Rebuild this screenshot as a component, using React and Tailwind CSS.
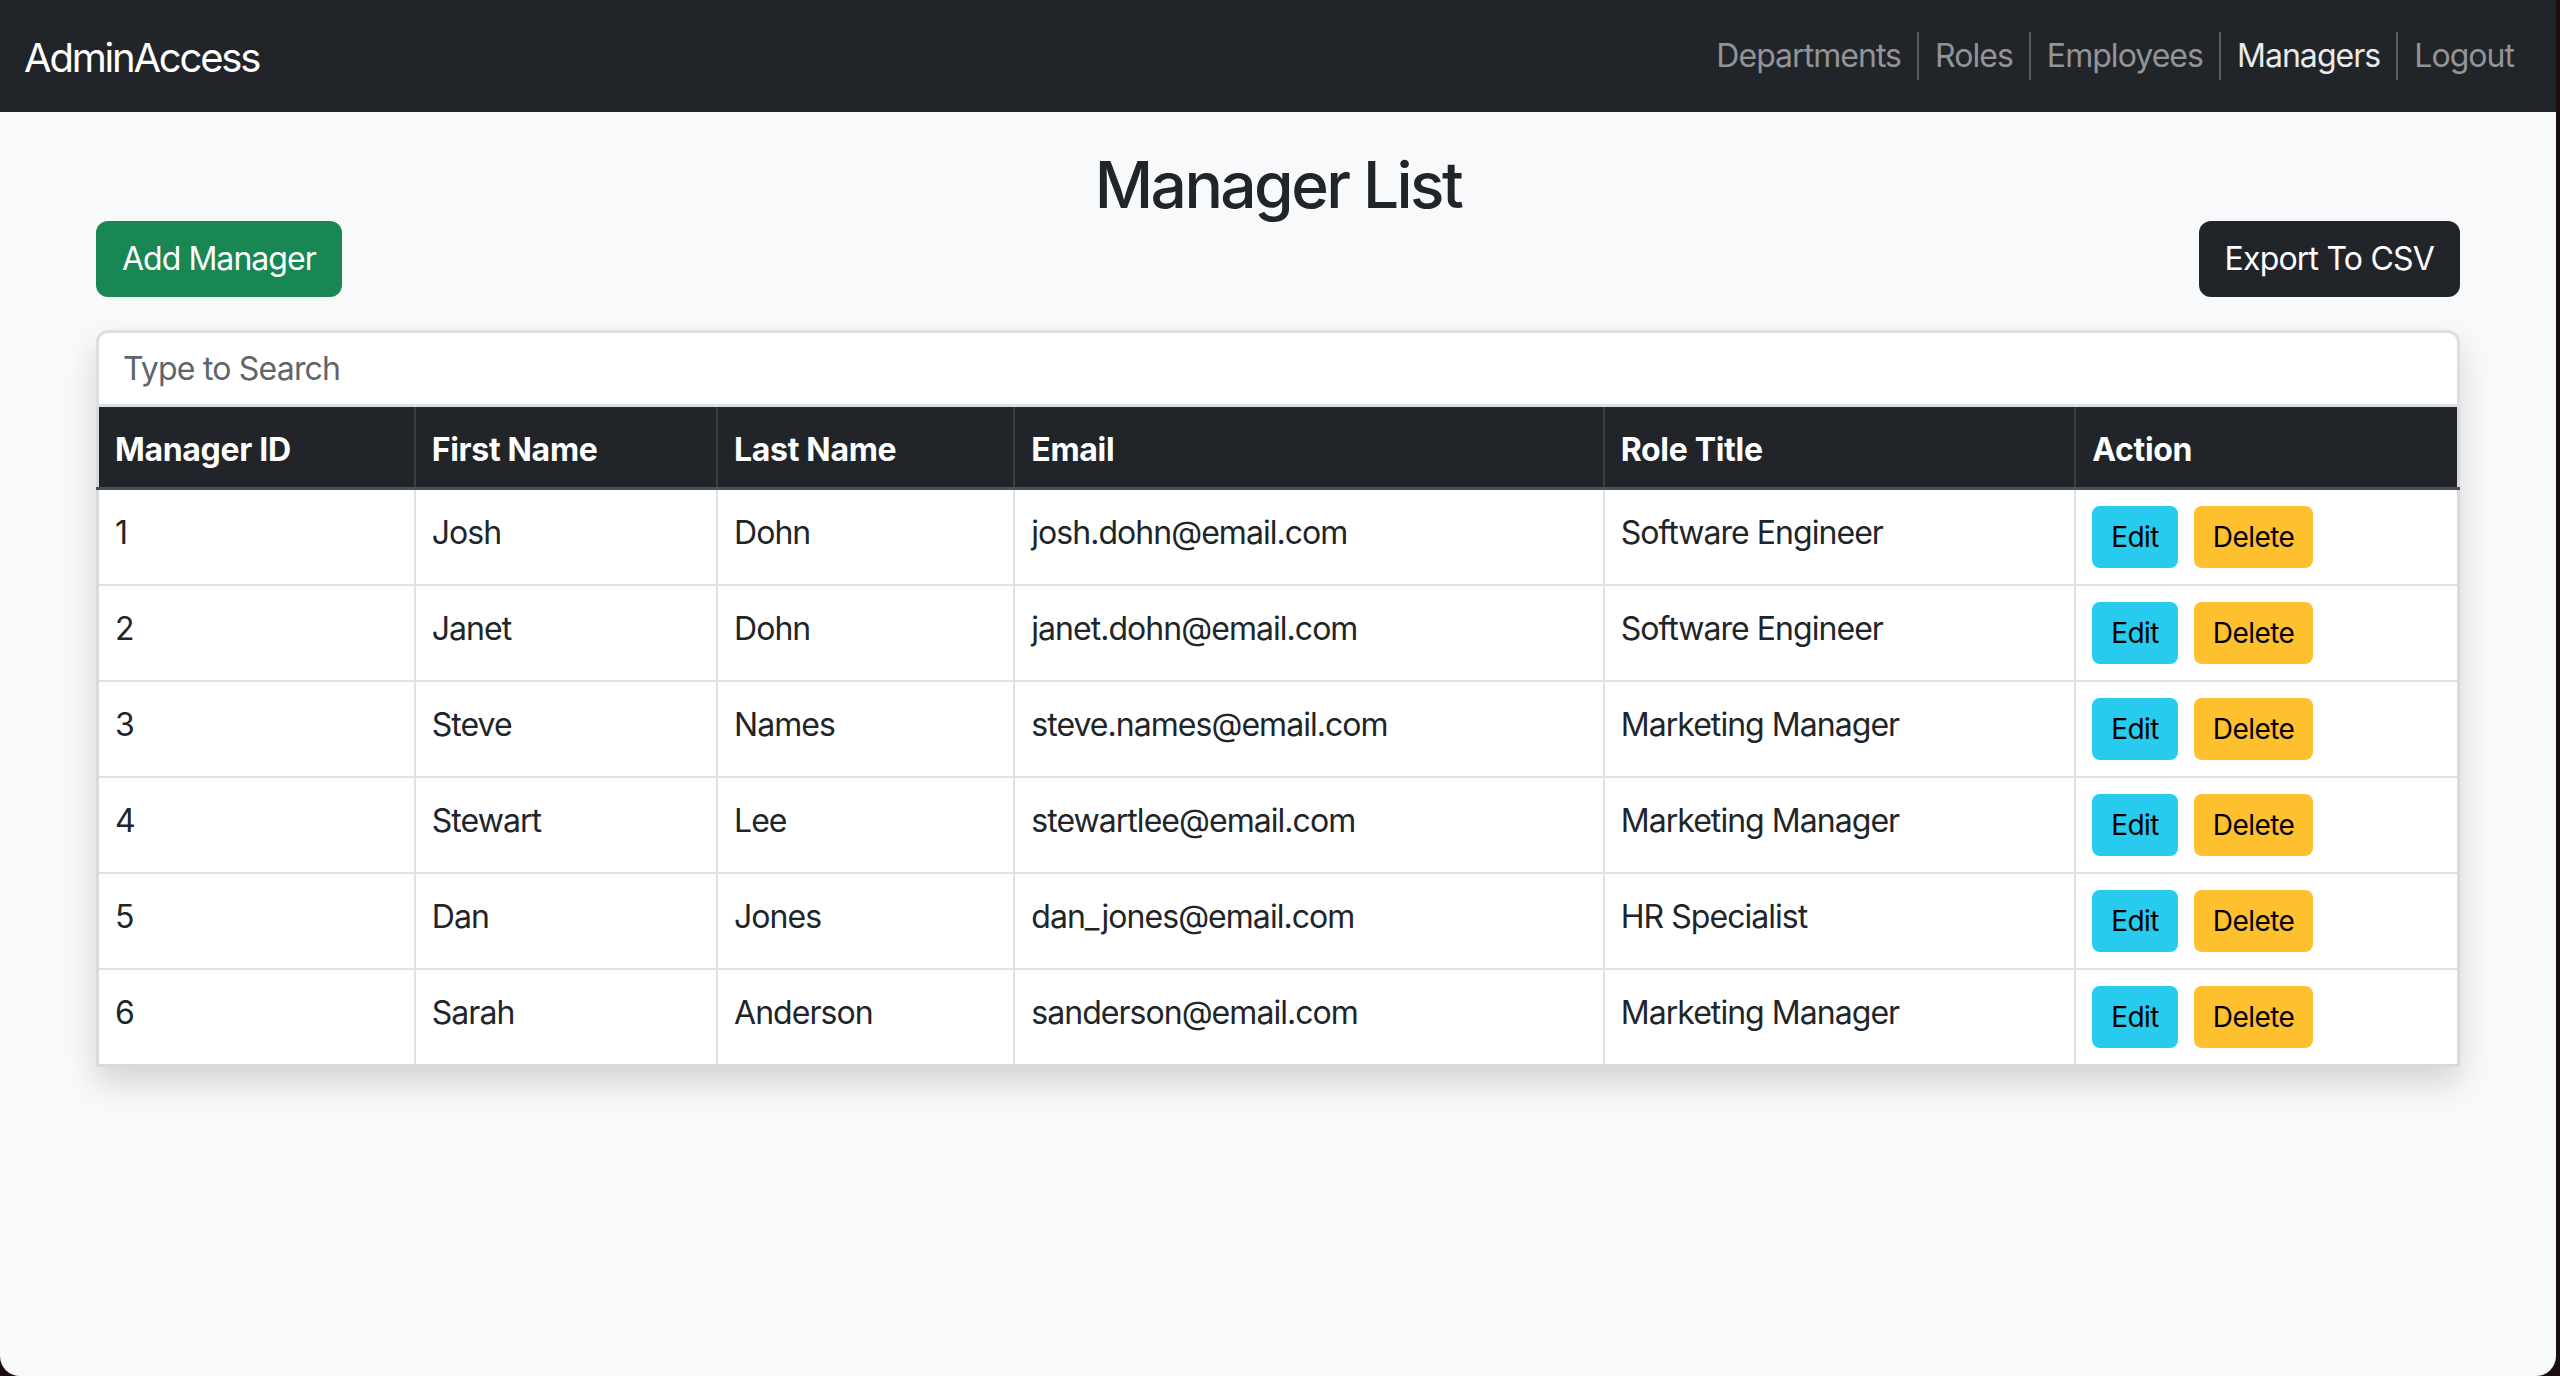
import React from 'react';

const managers = [
  { id: 1, first: 'Josh', last: 'Dohn', email: 'josh.dohn@email.com', role: 'Software Engineer' },
  { id: 2, first: 'Janet', last: 'Dohn', email: 'janet.dohn@email.com', role: 'Software Engineer' },
  { id: 3, first: 'Steve', last: 'Names', email: 'steve.names@email.com', role: 'Marketing Manager' },
  { id: 4, first: 'Stewart', last: 'Lee', email: 'stewartlee@email.com', role: 'Marketing Manager' },
  { id: 5, first: 'Dan', last: 'Jones', email: 'dan_jones@email.com', role: 'HR Specialist' },
  { id: 6, first: 'Sarah', last: 'Anderson', email: 'sanderson@email.com', role: 'Marketing Manager' },
];

const links = ['Departments', 'Roles', 'Employees', 'Managers', 'Logout'];
const headers = ['Manager ID', 'First Name', 'Last Name', 'Email', 'Role Title', 'Action'];
const widths = ['w-[317px]', 'w-[302px]', 'w-[297px]', 'w-[589px]', 'w-[471px]', 'w-[383px]'];

const cell = 'align-top px-4 pt-[19px] pb-[13px] leading-[48px] tracking-[-0.03em] border-2 border-[#dee2e6]';

const App = () => {
  return (
    <div className="w-full h-[1376px] bg-[#1a0e0f] font-['Inter',sans-serif] tracking-[-0.02em] text-[#212529]">
      <div className="w-[2556px] h-[1376px] bg-[#f8f9fa] rounded-b-[20px] overflow-hidden">
        {/* Navbar */}
        <nav className="h-[112px] bg-[#212529] flex items-center justify-between pl-6 pr-[26px]">
          <span className="text-[40px] leading-[60px] pt-1 text-white tracking-[-0.055em]">AdminAccess</span>
          <div className="flex items-center">
            {links.map((l, i) => (
              <span
                key={l}
                className={`px-4 text-[32px] leading-[48px] tracking-[-0.03em] ${i > 0 ? 'border-l-2 border-[#5b5e62]' : ''} ${l === 'Managers' ? 'text-[#e9eaeb]' : 'text-[#929497]'}`}
              >
                {l}
              </span>
            ))}
          </div>
        </nav>

        <div className="px-[96px]">
          <h2 className="mt-8 pt-[2px] -mb-[2px] text-center text-[64px] leading-[77px] font-medium tracking-[-0.04em]">Manager List</h2>

          <div className="flex justify-between items-center">
            <button className="h-[76px] px-[26px] rounded-[12px] bg-[#198754] text-white text-[32px] tracking-[-0.03em]">Add Manager</button>
            <button className="h-[76px] px-[26px] rounded-[12px] bg-[#212529] text-white text-[32px] tracking-[-0.025em]">Export To CSV</button>
          </div>

          {/* Table card */}
          <div className="mt-[33px] shadow-[0_16px_32px_rgba(0,0,0,0.15)] rounded-t-[12px]">
            <input
              className="block w-full h-[77px] bg-white border-[3px] border-[#dcdee1] rounded-t-[12px] px-6 text-[32px] tracking-[-0.025em] outline-none placeholder:text-[#5f656b]"
              placeholder="Type to Search"
            />
            <table className="w-full table-fixed border-collapse border-[3px] border-[#d8dadd] border-t-0 bg-white text-[32px]">
              <colgroup>
                {widths.map((w, i) => (
                  <col key={i} className={w} />
                ))}
              </colgroup>
              <thead>
                <tr>
                  {headers.map((h) => (
                    <th
                      key={h}
                      className="bg-[#212529] text-white font-bold text-left px-4 pt-[19px] pb-[13px] leading-[48px] border-x-2 border-[#3a3e42] border-b-[3px] border-b-[#4d5154]"
                    >
                      {h}
                    </th>
                  ))}
                </tr>
              </thead>
              <tbody>
                {managers.map((m) => (
                  <tr key={m.id}>
                    <td className={cell}>{m.id}</td>
                    <td className={cell}>{m.first}</td>
                    <td className={cell}>{m.last}</td>
                    <td className={cell}>{m.email}</td>
                    <td className={cell}>{m.role}</td>
                    <td className="align-top px-4 py-4 border-2 border-[#dee2e6]">
                      <div className="flex gap-4">
                        <button className="h-[62px] px-[19px] rounded-[8px] bg-[#27cbee] text-black text-[28px] tracking-[-0.02em]">Edit</button>
                        <button className="h-[62px] px-[19px] rounded-[8px] bg-[#ffc02f] text-black text-[28px] tracking-[-0.02em]">Delete</button>
                      </div>
                    </td>
                  </tr>
                ))}
              </tbody>
            </table>
          </div>
        </div>
      </div>
    </div>
  );
};

export default App;
